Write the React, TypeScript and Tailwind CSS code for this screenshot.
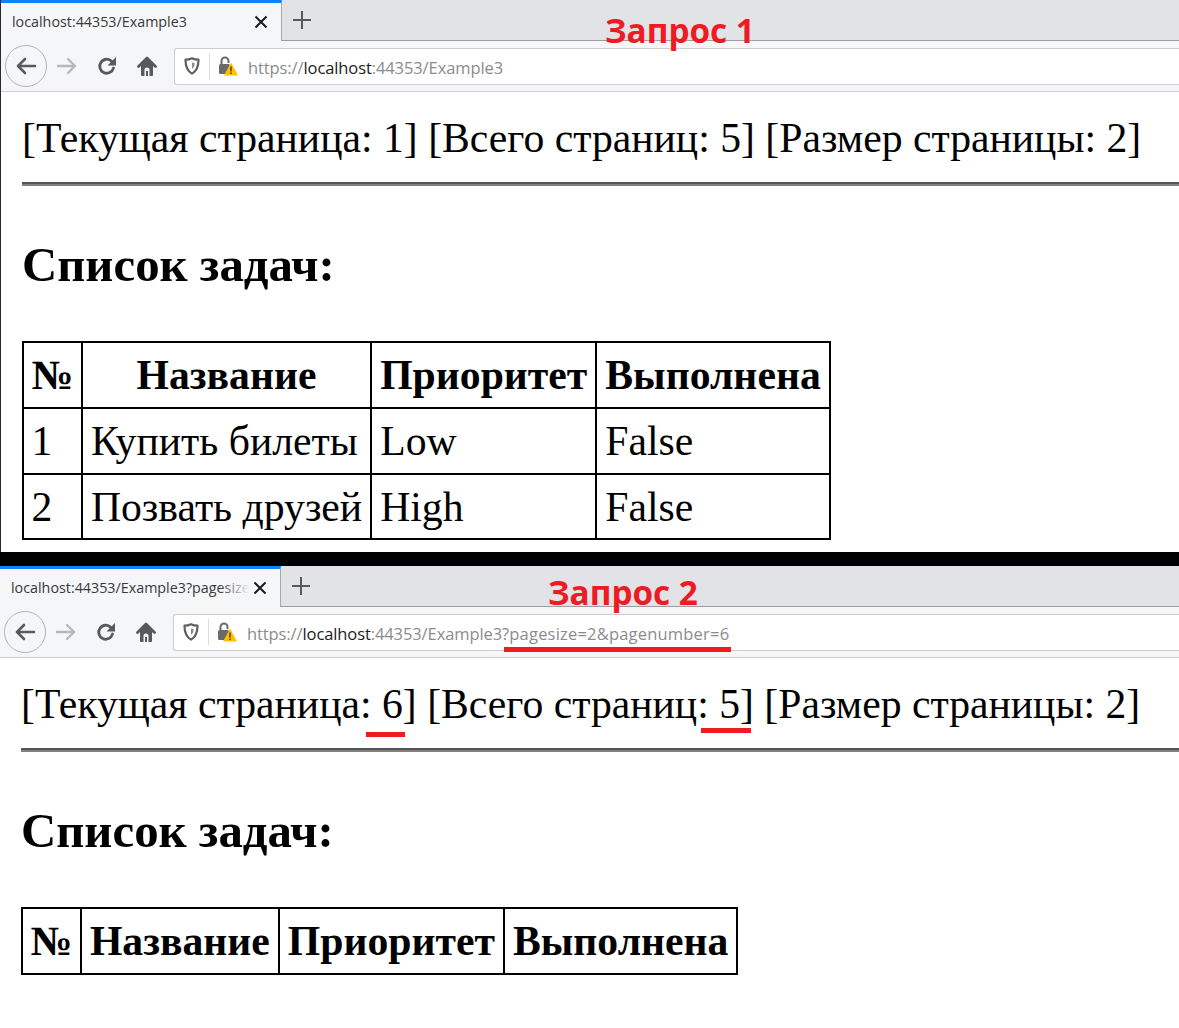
import React from "react";

const serif = { fontFamily: '"Liberation Serif", "Times New Roman", serif' };

function Icons() {
  return (
    <div className="flex items-center pl-[4px]">
      <div className="w-[42px] h-[42px] rounded-full border border-[#b4b4b4] bg-[#f5f6f8] flex items-center justify-center">
        <svg width="22" height="22" viewBox="0 0 22 22" fill="none" stroke="#5a5a5c" strokeWidth="2.6" strokeLinecap="round" strokeLinejoin="round">
          <path d="M20 11H3M10 4l-7 7 7 7" />
        </svg>
      </div>
      <svg className="ml-[9px]" width="22" height="22" viewBox="0 0 22 22" fill="none" stroke="#b8b8ba" strokeWidth="2.4" strokeLinecap="round" strokeLinejoin="round">
        <path d="M2 11h17M12 4l7 7-7 7" />
      </svg>
      <svg className="ml-[19px]" width="20" height="20" viewBox="0 0 20 20" fill="none" stroke="#59595b" strokeWidth="2.8" strokeLinecap="round" strokeLinejoin="round">
        <path d="M16.500 12a7 7 0 1 1-1.600-6.500L17 7.500" />
        <path d="M19 1v8.500h-8.500Z" fill="#59595b" stroke="none" />
      </svg>
      <svg className="ml-[20px]" width="20" height="21" viewBox="0 0 20 21" fill="none">
        <path d="M1.500 10.500 10 2 18.500 10.500" stroke="#59595b" strokeWidth="2.800" strokeLinecap="round" strokeLinejoin="round" />
        <path d="M4 8.500 10 3l6 5.500V19a1 1 0 0 1-1 1H5a1 1 0 0 1-1-1Z" fill="#59595b" />
        <path d="M7.500 20v-6a2.500 2.500 0 0 1 5 0v6h-1.500v-5h-2v5Z" fill="#f5f6f8" />
      </svg>
    </div>
  );
}

function Browser({ title, fade, path, query }: { title: string; fade?: boolean; path: string; query?: string }) {
  return (
    <div style={{ fontFamily: '"Open Sans", "Noto Sans", sans-serif' }}>
      <div className="flex h-[41px] bg-[#e2e3e6] border-b border-[#9d9d9f]">
        <div className="w-[281px] h-[41px] bg-[#f5f6f8] border-t-[3px] border-r border-t-[#0a84ff] border-r-[#a8a8aa] flex items-center pl-[11px] pr-[13px] text-[14.3px] text-[#38383d]">
          <span className="relative whitespace-nowrap">
            {title}
            {fade && <span className="absolute right-0 top-0 bottom-0 w-[30px] bg-gradient-to-r from-transparent to-[#f5f6f8]" />}
          </span>
          <svg className="ml-auto" width="14" height="14" viewBox="0 0 14 14" stroke="#1a1a1c" strokeWidth="2"><path d="M1.500 1.500l11 11M12.500 1.500l-11 11" /></svg>
        </div>
        <svg className="ml-[11px] mt-[11px]" width="18" height="18" viewBox="0 0 18 18" stroke="#59595b" strokeWidth="2"><path d="M9 0v18M0 9h18" /></svg>
      </div>
      <div className="flex items-center h-[51px] bg-[#f5f6f8] border-b border-[#cfcfd1]">
        <Icons />
        <div className="ml-[17px] flex-1 h-[37px] bg-white border border-r-0 border-[#cdcdcf] rounded-l-[3px] flex items-center">
          <svg className="ml-[9px]" width="16" height="18" viewBox="0 0 16 18" fill="none">
            <path d="M8 1.300c2 1 4 1.400 6.500 1.400 0 6.300-1.500 11-6.500 13.900C3 13.700 1.500 9 1.500 2.700 4 2.700 6 2.300 8 1.300Z" stroke="#5f5f62" strokeWidth="2.200" strokeLinejoin="round" />
            <path d="M8 5.500c.9.300 1.800.4 2.700.4 0 2.500-.7 4.500-2.700 6Z" fill="#8e8e90" />
          </svg>
          <div className="ml-[9px] w-px h-[26px] bg-[#dcdcde]" />
          <svg className="ml-[8px]" width="20" height="20" viewBox="0 0 20 20">
            <path d="M3.500 8V5a3.500 3.500 0 0 1 7 0V7" fill="none" stroke="#6a6a6c" strokeWidth="2" />
            <rect x="1" y="8" width="11" height="10" rx="1.500" fill="#6a6a6c" />
            <path d="M13 6.500 20 19.500H6Z" fill="#ffbf00" />
            <path d="M13 10.500v5M13 16.500v1.500" stroke="#3a2b00" strokeWidth="1.300" />
          </svg>
          <span className="ml-[10px] pt-[5px] text-[16.500px] tracking-[-0.1px] text-[#8b8b8f] whitespace-nowrap">
            https://<span className="text-[#1c1c20]">localhost</span>:44353/{path}
            {query && <span className="tracking-[0.2px]">{query}</span>}
          </span>
        </div>
      </div>
    </div>
  );
}

function Cell({ children, head, center, last, first }: { children: React.ReactNode; head?: boolean; center?: boolean; last?: boolean; first?: boolean }) {
  const Tag = head ? "th" : "td";
  return (
    <Tag className={`border-2 border-black ${first ? "px-[7.500px]" : "px-[8px]"} ${last ? "h-[65px]" : "h-[66px]"} text-[41.700px] leading-[46px] ${head ? "font-bold" : "font-normal"} ${center ? "text-center" : "text-left"}`}>
      {children}
    </Tag>
  );
}

function Page({ current, rows }: { current: string; rows: string[][] }) {
  return (
    <div className="px-[21px] text-black" style={serif}>
      <div className="text-[41.700px] leading-[46px] pt-[23px] whitespace-nowrap">
        [Текущая страница: {current}] [Всего страниц: 5] [Размер страницы: 2]
      </div>
      <div className="mt-[21px] -mr-[21px] h-[4px] border-t-2 border-[#555555] bg-[#808080]" />
      <h2 className="mt-[52px] text-[48.800px] leading-[55px] font-bold">Список задач:</h2>
      <table className="mt-[48px] border-collapse">
        <thead>
          <tr>
            <Cell head center first>№</Cell>
            <Cell head center>Название</Cell>
            <Cell head center>Приоритет</Cell>
            <Cell head center>Выполнена</Cell>
          </tr>
        </thead>
        <tbody>
          {rows.map((r, i) => (
            <tr key={r[0]}>
              {r.map((c, j) => (
                <Cell key={c} first={j === 0} last={i === rows.length - 1}>{c}</Cell>
              ))}
            </tr>
          ))}
        </tbody>
      </table>
    </div>
  );
}

function Label({ children, className }: { children: string; className: string }) {
  return (
    <span className={`absolute text-[33.300px] leading-[40px] font-bold text-[#ed1c24] whitespace-nowrap ${className}`} style={{ fontFamily: '"Open Sans", "Noto Sans", sans-serif' }}>
      {children}
    </span>
  );
}

export default function App() {
  return (
    <div className="relative w-[1179px] h-[1028px] overflow-hidden bg-white">
      <div className="h-[552px] overflow-hidden border-l border-[#2a2a2a]">
        <Browser title="localhost:44353/Example3" path="Example3" />
        <Page current="1" rows={[["1", "Купить билеты", "Low", "False"], ["2", "Позвать друзей", "High", "False"]]} />
      </div>
      <div className="h-[14px] bg-black" />
      <div className="h-[462px] overflow-hidden">
        <Browser title="localhost:44353/Example3?pagesize" fade path="Example3" query="?pagesize=2&pagenumber=6" />
        <Page current="6" rows={[]} />
      </div>
      <Label className="left-[605px] top-[10px]">Запрос 1</Label>
      <Label className="left-[548px] top-[572px]">Запрос 2</Label>
      <div className="absolute left-[504px] top-[647px] w-[227px] h-[5px] bg-[#ed1c24]" />
      <div className="absolute left-[366px] top-[732px] w-[39px] h-[5px] bg-[#ed1c24]" />
      <div className="absolute left-[701px] top-[728px] w-[50px] h-[5px] bg-[#ed1c24]" />
    </div>
  );
}
